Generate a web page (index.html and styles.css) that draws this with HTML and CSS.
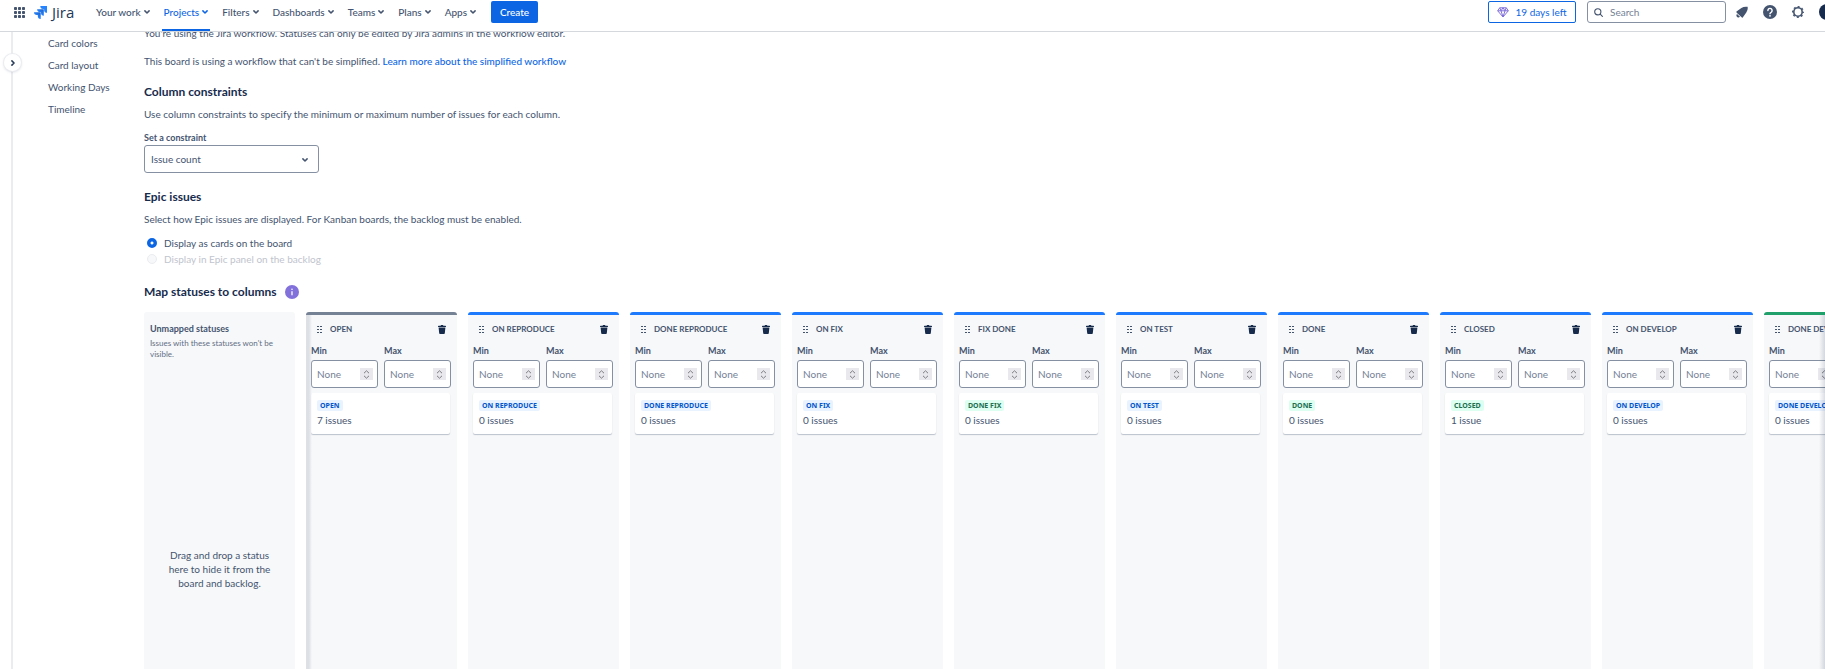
FILE: index.html
```html
<!DOCTYPE html>
<html lang="en">
<head>
<meta charset="utf-8">
<title>Board settings - Jira</title>
<link rel="stylesheet" href="styles.css">
</head>
<body>
<svg class="defs" aria-hidden="true">
  <symbol id="chev" viewBox="0 0 6 4"><path d="M.9 .9 3 3 5.1 .9" fill="none" stroke="currentColor" stroke-width="1.5" stroke-linecap="round" stroke-linejoin="round"/></symbol>
  <symbol id="drag" viewBox="0 0 5 7"><path d="M0 0h2v1H0zM3 0h2v1H3zM0 3h2v1H0zM3 3h2v1H3zM0 6h2v1H0zM3 6h2v1H3z" fill="currentColor"/></symbol>
  <symbol id="trash" viewBox="0 0 8 9"><path d="M0 1.400Q0 .8.6.8H2.600L3 0h2l.4.8h2q.6 0 .6.6V2H0zM.6 2.600h6.800L6.800 8.300Q6.700 9 6 9H2Q1.300 9 1.200 8.300z" fill="currentColor"/></symbol>
  <symbol id="updown" viewBox="0 0 7 9"><path d="M1 3.200 3.500.8 6 3.200M1 5.800 3.500 8.200 6 5.800" fill="none" stroke="currentColor" stroke-width="1"/></symbol>
</svg>

<header class="topbar">
  <button class="icon-btn" aria-label="Switch to">
    <svg width="11" height="11" viewBox="0 0 11 11" fill="currentColor"><rect width="3" height="3" rx=".8"/><rect x="4" width="3" height="3" rx=".8"/><rect x="8" width="3" height="3" rx=".8"/><rect y="4" width="3" height="3" rx=".8"/><rect x="4" y="4" width="3" height="3" rx=".8"/><rect x="8" y="4" width="3" height="3" rx=".8"/><rect y="8" width="3" height="3" rx=".8"/><rect x="4" y="8" width="3" height="3" rx=".8"/><rect x="8" y="8" width="3" height="3" rx=".8"/></svg>
  </button>
  <a class="logo" href="#">
    <svg width="13" height="13" viewBox="0 0 13 13">
      <defs><linearGradient id="lg" x1="1" y1="0" x2="0" y2="1"><stop offset=".1" stop-color="#1d65cf"/><stop offset=".6" stop-color="#2684ff"/></linearGradient></defs>
      <path d="M6.300 0H13v6.700A2.900 2.900 0 0 1 10.100 3.900V2.900H9.100A2.900 2.900 0 0 1 6.300 0z" fill="#2684ff"/>
      <path d="M3.100 3.200h6.700v6.600A2.900 2.900 0 0 1 7 7V6H6A2.900 2.900 0 0 1 3.100 3.200z" fill="url(#lg)"/>
      <path d="M0 6.300h6.700V13a2.900 2.900 0 0 1-2.900-2.900v-1h-1A2.900 2.900 0 0 1 0 6.300z" fill="url(#lg)"/>
    </svg>
    <span>Jira</span>
  </a>
  <nav class="nav">
    <button>Your work<svg class="chev"><use href="#chev"/></svg></button>
    <button class="active">Projects<svg class="chev"><use href="#chev"/></svg></button>
    <button>Filters<svg class="chev"><use href="#chev"/></svg></button>
    <button>Dashboards<svg class="chev"><use href="#chev"/></svg></button>
    <button>Teams<svg class="chev"><use href="#chev"/></svg></button>
    <button>Plans<svg class="chev"><use href="#chev"/></svg></button>
    <button>Apps<svg class="chev"><use href="#chev"/></svg></button>
  </nav>
  <button class="create">Create</button>
  <div class="tools">
    <button class="trial">
      <svg width="12" height="11" viewBox="0 0 12 11" fill="none" stroke="#8270db" stroke-width="1" stroke-linejoin="round"><path d="M2.700.8h6.600l2 3L6 10 .7 3.800zM.7 3.800h10.600M4 3.800 6 10l2-6.200M2.700.8 4 3.800 6 .8l2 3L9.300.8"/></svg>
      19 days left
    </button>
    <label class="search">
      <svg width="9" height="9" viewBox="0 0 9 9" fill="none" stroke="#44546f" stroke-width="1.100" stroke-linecap="round"><circle cx="3.800" cy="3.800" r="3.100"/><path d="m6.200 6.200 2.200 2.200"/></svg>
      <input type="search" placeholder="Search" aria-label="Search">
    </label>
    <button class="icon-btn" aria-label="Notifications"><svg width="12" height="12" viewBox="0 0 12 12" fill="currentColor"><path d="M11.600.8Q8 .2 5.400 2.100L.8 5.300Q0 6 .7 6.700L5.900 11.400Q6.600 12 7.100 11.100L10.300 6.500Q12.200 4 11.600.8zM1 8.100 4 10.800A2 2 0 1 1 1 8.100z"/></svg></button>
    <button class="icon-btn" aria-label="Help"><svg width="14" height="14" viewBox="0 0 14 14"><circle cx="7" cy="7" r="7" fill="currentColor"/><path d="M4.900 5.500a2.100 2.100 0 1 1 3.200 1.800Q7 7.900 7 8.700" fill="none" stroke="#fff" stroke-width="1.400" stroke-linecap="round"/><circle cx="7" cy="10.800" r=".9" fill="#fff"/></svg></button>
    <button class="icon-btn" aria-label="Settings"><svg width="12" height="12" viewBox="0 0 12 12" fill="none" stroke="currentColor"><circle cx="6" cy="6" r="4.200" stroke-width="1.600"/><circle cx="6" cy="6" r="5.300" stroke-width="1.400" stroke-dasharray="2 2.162" stroke-dashoffset="1"/></svg></button>
    <button class="avatar" aria-label="Your profile"></button>
  </div>
</header>

<div class="page">
  <div class="rail"><button class="expand" aria-label="Expand sidebar"><svg width="4" height="6" viewBox="0 0 4 6"><path d="M.9.9 3 3 .9 5.100" fill="none" stroke="currentColor" stroke-width="1.500" stroke-linecap="round"/></svg></button></div>
  <nav class="side">
    <a href="#">Card colors</a>
    <a href="#">Card layout</a>
    <a href="#">Working Days</a>
    <a href="#">Timeline</a>
  </nav>
  <main class="main">
    <p>You're using the Jira workflow. Statuses can only be edited by Jira admins in the workflow editor.</p>
    <p class="note">This board is using a workflow that can't be simplified. <a href="#">Learn more about the simplified workflow</a></p>
    <h2>Column constraints</h2>
    <p>Use column constraints to specify the minimum or maximum number of issues for each column.</p>
    <label class="field-label" for="constraint">Set a constraint</label>
    <div class="select">
      <select id="constraint"><option>Issue count</option></select>
      <svg class="chev"><use href="#chev"/></svg>
    </div>
    <h2>Epic issues</h2>
    <p>Select how Epic issues are displayed. For Kanban boards, the backlog must be enabled.</p>
    <div class="radios">
      <label><input type="radio" name="epic" checked>Display as cards on the board</label>
      <label class="disabled"><input type="radio" name="epic" disabled>Display in Epic panel on the backlog</label>
    </div>
    <div class="map-head">
      <h2>Map statuses to columns</h2>
      <button class="info" aria-label="More information"><svg width="14" height="14" viewBox="0 0 14 14"><circle cx="7" cy="7" r="7" fill="#8270db"/><path d="M7 6.200v4" stroke="#fff" stroke-width="1.300"/><circle cx="7" cy="4.200" r=".8" fill="#fff"/></svg></button>
    </div>
    <div class="board">
      <section class="unmapped">
        <h3>Unmapped statuses</h3>
        <p class="hint">Issues with these statuses won't be visible.</p>
        <p class="drop">Drag and drop a status here to hide it from the board and backlog.</p>
      </section>
      <div class="columns" id="columns"></div>
    </div>
  </main>
</div>
<script src="board.js"></script>
</body>
</html>
```
FILE: styles.css
```css
* { box-sizing: border-box; }
body {
  margin: 0;
  height: 100vh;
  overflow: hidden;
  font: 10px/14px Lato, "Open Sans", sans-serif;
  color: #44546f;
  background: #fff;
}
h2, h3, p { margin: 0; }
button, input, select { font: inherit; color: inherit; }
button { padding: 0; border: 0; background: none; }
a { color: inherit; text-decoration: none; }
svg { display: block; flex: none; }
.defs { position: absolute; width: 0; height: 0; }
.chev { width: 6px; height: 4px; }

.topbar {
  position: fixed;
  inset: 0 0 auto 0;
  z-index: 2;
  height: 32px;
  padding: 0 0 7px 14px;
  display: flex;
  align-items: center;
  overflow: hidden;
  background: #fff;
  border-bottom: 1px solid #d5d8dd;
}
.icon-btn { color: #44546f; }
.logo { display: flex; align-items: center; gap: 5px; margin-left: 9px; width: 60px; color: #253858; font: 500 15px/20px "Open Sans", sans-serif; }
.nav { display: flex; gap: 10px; font-weight: 500; }
.nav button { position: relative; display: flex; align-items: center; gap: 3px; height: 24px; padding: 0 2px; }
.nav .active { color: #0c66e4; }
.nav .active::after { content: ""; position: absolute; inset: 29px 0 auto 0; height: 3px; background: #0c66e4; }
.create { margin-left: 13px; width: 47px; height: 22px; border-radius: 2px; background: #0c66e4; color: #fff; font-weight: 500; }
.tools { display: flex; align-items: center; gap: 15px; margin-left: auto; }
.trial { display: flex; align-items: center; justify-content: center; gap: 6px; width: 88px; height: 22px; border: 1px solid #0c66e4; border-radius: 2px; color: #0c66e4; }
.search { display: flex; align-items: center; gap: 7px; width: 139px; height: 22px; margin: 0 -5px 0 -4px; padding: 0 6px; border: 1px solid #8590a2; border-radius: 3px; }
.search input { width: 100%; min-width: 0; padding: 0; border: 0; outline: 0; background: none; }
::placeholder { color: #758195; opacity: 1; }
.avatar { width: 16px; height: 16px; margin-right: -10px; border-radius: 50%; background: #172b4d; }

.page { display: flex; height: 100%; padding-top: 26px; }
.rail { flex: none; width: 13px; border-right: 2px solid #ebecf0; }
.expand {
  position: absolute;
  left: 4px;
  top: 54px;
  display: grid;
  place-items: center;
  width: 17px;
  height: 17px;
  border-radius: 50%;
  background: #fff;
  color: #253858;
  box-shadow: 0 0 0 1px #ebecf0, 0 1px 3px #091e4233;
}
.side { flex: none; width: 131px; padding: 6px 0 0 35px; line-height: 22px; }
.side a { display: block; }

.main { flex: 1; min-width: 0; display: flex; flex-direction: column; }
.main a { color: #0c66e4; font-weight: 500; }
.note { margin-top: 14px; }
h2 { font-size: 12px; line-height: 16px; font-weight: 700; color: #172b4d; }
.main > h2 { margin: 16px 0 7px; }
.field-label { margin: 11px 0 2px; font-size: 9px; line-height: 11px; font-weight: 700; }
.select { position: relative; width: 175px; }
.select select { display: block; width: 100%; height: 28px; padding: 0 6px; border: 1px solid #8590a2; border-radius: 3px; background: #fff; appearance: none; }
.select .chev { position: absolute; right: 11px; top: 13px; }
.radios { margin: 9px 0 0 2px; }
.radios label { display: flex; align-items: center; gap: 7px; height: 16px; }
.radios input { appearance: none; width: 10px; height: 10px; margin: 0 0 0 1px; border: 1px solid #ebecf0; border-radius: 50%; background: #f7f8f9; }
.radios input:checked { border: 3px solid #0c66e4; background: radial-gradient(#fff 1px, #0c66e4 2px); }
.radios .disabled { color: #bfc4ce; }
.map-head { display: flex; align-items: center; gap: 8px; margin: 17px 0 12px; }

.board { flex: 1; display: flex; gap: 11px; min-height: 0; }
.unmapped { flex: none; width: 151px; padding: 11px 6px; border-radius: 3px 3px 0 0; background: #f7f8f9; }
h3 { font-size: 8px; line-height: 12px; font-weight: 700; }
.unmapped h3 { font-size: 9px; }
.hint { margin-top: 3px; font-size: 8px; line-height: 11px; color: #626f86; }
.drop { width: 110px; margin: 188px auto 0; text-align: center; }
.columns { position: relative; flex: 1; min-width: 0; display: flex; gap: 11px; overflow: hidden; }
.columns::before, .columns::after { content: ""; position: absolute; z-index: 1; top: 3px; bottom: 0; width: 6px; pointer-events: none; }
.columns::before { left: 0; background: linear-gradient(90deg, #dde1e6 50%, #dde1e600); }
.columns::after { right: 0; background: linear-gradient(270deg, #091e4226, #091e4200); }

.column { flex: none; width: 151px; padding: 8px 5px 0; border-top: 3px solid #1d7afc; border-radius: 3px 3px 0 0; background: #f7f8f9; }
.column.todo { border-color: #758195; }
.column.done { border-color: #22a06b; }
.column-head { display: flex; align-items: center; gap: 8px; padding: 0 6px; }
.drag { width: 5px; height: 7px; }
.column-head h3 { flex: 1; white-space: nowrap; }
.trash { color: #172b4d; }
.trash svg { width: 8px; height: 9px; }
.limits { display: flex; gap: 6px; margin-top: 10px; }
.limit { position: relative; width: 67px; font-size: 9px; line-height: 12px; font-weight: 700; }
.limit input { display: block; width: 100%; height: 28px; margin-top: 3px; padding: 0 20px 0 5px; border: 1px solid #8590a2; border-radius: 3px; background: #fff; font-size: 10px; font-weight: 400; appearance: textfield; }
.limit input::-webkit-inner-spin-button { appearance: none; }
.spin { position: absolute; right: 5px; bottom: 8px; display: grid; place-items: center; width: 13px; height: 12px; background: #e9e9ed; color: #7a7a80; }
.spin svg { width: 7px; height: 9px; }
.card { width: 139px; height: 41px; margin-top: 5px; padding: 7px 6px; border-radius: 2px; background: #fff; box-shadow: 0 1px 1px #091e4240; }
.lozenge { display: block; width: max-content; padding: 0 3px; border-radius: 2px; background: #e9f2ff; color: #0055cc; font: 700 7px/11px "Noto Sans", sans-serif; }
.lozenge.green { background: #dcfff1; color: #216e4e; }
.count { margin-top: 2px; }
```
FILE: board.js
```
const columns = [
  ["OPEN", "OPEN", "", "7 issues", "todo"],
  ["ON REPRODUCE", "ON REPRODUCE", "", "0 issues", ""],
  ["DONE REPRODUCE", "DONE REPRODUCE", "", "0 issues", ""],
  ["ON FIX", "ON FIX", "", "0 issues", ""],
  ["FIX DONE", "DONE FIX", "green", "0 issues", ""],
  ["ON TEST", "ON TEST", "", "0 issues", ""],
  ["DONE", "DONE", "green", "0 issues", ""],
  ["CLOSED", "CLOSED", "green", "1 issue", ""],
  ["ON DEVELOP", "ON DEVELOP", "", "0 issues", ""],
  ["DONE DEVELOP", "DONE DEVELOP", "", "0 issues", "done"],
];

const limit = (name) => `
  <label class="limit">${name}
    <input type="number" placeholder="None">
    <span class="spin"><svg><use href="#updown"/></svg></span>
  </label>`;

document.getElementById("columns").innerHTML = columns.map(([title, status, tone, count, kind]) => `
  <section class="column ${kind}">
    <div class="column-head">
      <svg class="drag"><use href="#drag"/></svg>
      <h3>${title}</h3>
      <button class="trash" aria-label="Delete ${title}"><svg><use href="#trash"/></svg></button>
    </div>
    <div class="limits">${limit("Min")}${limit("Max")}</div>
    <div class="card">
      <span class="lozenge ${tone}">${status}</span>
      <p class="count">${count}</p>
    </div>
  </section>`).join("");
```
